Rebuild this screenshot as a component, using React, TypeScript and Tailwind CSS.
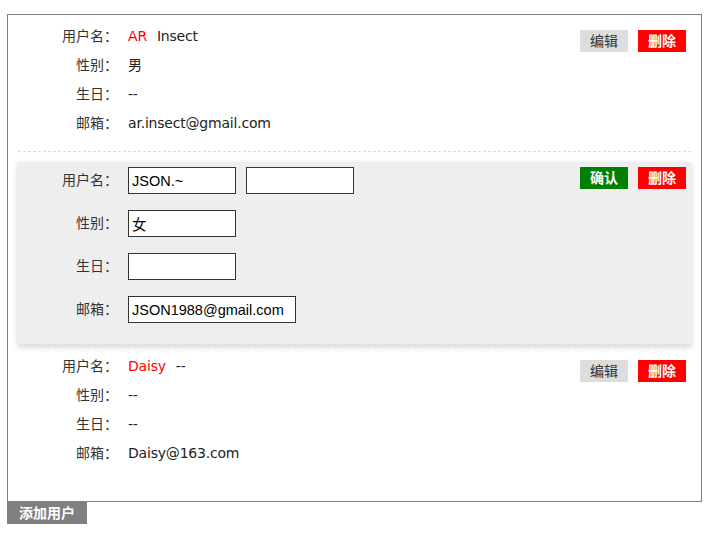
import React from 'react';

const cjk = "font-['Liberation_Sans','Noto_Sans_CJK_SC',sans-serif]";
const geo = "font-['DejaVu_Sans','Noto_Sans_CJK_SC',sans-serif]";

const Label = ({ text }: { text: string }) => (
  <span className={`w-[100px] text-right text-[14px] text-[#333] ${cjk}`}>{text}</span>
);

const ViewRow = ({ label, children }: { label: string; children: React.ReactNode }) => (
  <div className="flex h-[29px] items-center">
    <Label text={label} />
    <div className={`pl-[10px] text-[14px] text-[#222] ${geo} tracking-[-0.2px]`}>{children}</div>
  </div>
);

const EditRow = ({ label, children }: { label: string; children: React.ReactNode }) => (
  <div className="mb-[16px] flex h-[27px] items-center">
    <Label text={label} />
    <div className="flex gap-[10px] pl-[10px]">{children}</div>
  </div>
);

const Field = ({ value, width = 'w-[108px]' }: { value: string; width?: string }) => (
  <input
    defaultValue={value}
    className={`${width} h-[27px] border border-[#333] bg-white px-[3px] text-[14.5px] text-black outline-none ${cjk}`}
  />
);

const Btn = ({ text, kind }: { text: string; kind: 'edit' | 'del' | 'ok' }) => {
  const cls =
    kind === 'edit'
      ? 'bg-[#dddddd] text-[#333] font-normal'
      : kind === 'del'
      ? 'bg-[#ff0000] text-white font-bold'
      : 'bg-[#008000] text-white font-bold';
  return (
    <button className={`flex h-[22px] w-[48px] items-center justify-center text-[14px] leading-none ${cls} ${cjk}`}>
      {text}
    </button>
  );
};

export default function App() {
  return (
    <div className="min-h-[535px] w-[714px] bg-white pl-[7px] pt-[14px]">
      <div className="w-[695px] border border-[#808080] px-[10px] pb-[20px]">
        {/* view item */}
        <div className="flex justify-between border-b border-dashed border-[#dddddd] pb-[13px] pt-[7px]">
          <div>
            <ViewRow label="用户名：">
              <span className="text-[#ff0000]">AR</span>
              <span className="ml-[10px]">Insect</span>
            </ViewRow>
            <ViewRow label="性别：">男</ViewRow>
            <ViewRow label="生日：">--</ViewRow>
            <ViewRow label="邮箱：">ar.insect@gmail.com</ViewRow>
          </div>
          <div className="mr-[5px] mt-[8px] flex gap-[10px] self-start">
            <Btn text="编辑" kind="edit" />
            <Btn text="删除" kind="del" />
          </div>
        </div>

        {/* editing item */}
        <div className="mt-[10px] flex justify-between border-b border-dashed border-[#dddddd] bg-[#eeeeee] pb-[5px] pt-[5px] shadow-[0_2px_6px_rgba(0,0,0,0.18)]">
          <div>
            <EditRow label="用户名：">
              <Field value="JSON.~" />
              <Field value="" />
            </EditRow>
            <EditRow label="性别：">
              <Field value="女" />
            </EditRow>
            <EditRow label="生日：">
              <Field value="" />
            </EditRow>
            <EditRow label="邮箱：">
              <Field value="JSON1988@gmail.com" width="w-[168px]" />
            </EditRow>
          </div>
          <div className="mr-[5px] flex gap-[10px] self-start">
            <Btn text="确认" kind="ok" />
            <Btn text="删除" kind="del" />
          </div>
        </div>

        {/* view item */}
        <div className="flex justify-between pb-[13px] pt-[7px]">
          <div>
            <ViewRow label="用户名：">
              <span className="text-[#ff0000]">Daisy</span>
              <span className="ml-[10px]">--</span>
            </ViewRow>
            <ViewRow label="性别：">--</ViewRow>
            <ViewRow label="生日：">--</ViewRow>
            <ViewRow label="邮箱：">Daisy@163.com</ViewRow>
          </div>
          <div className="mr-[5px] mt-[8px] flex gap-[10px] self-start">
            <Btn text="编辑" kind="edit" />
            <Btn text="删除" kind="del" />
          </div>
        </div>
      </div>
      <button className={`flex h-[22px] w-[80px] items-center justify-center bg-[#808080] text-[14px] font-bold text-white ${cjk}`}>
        添加用户
      </button>
    </div>
  );
}
